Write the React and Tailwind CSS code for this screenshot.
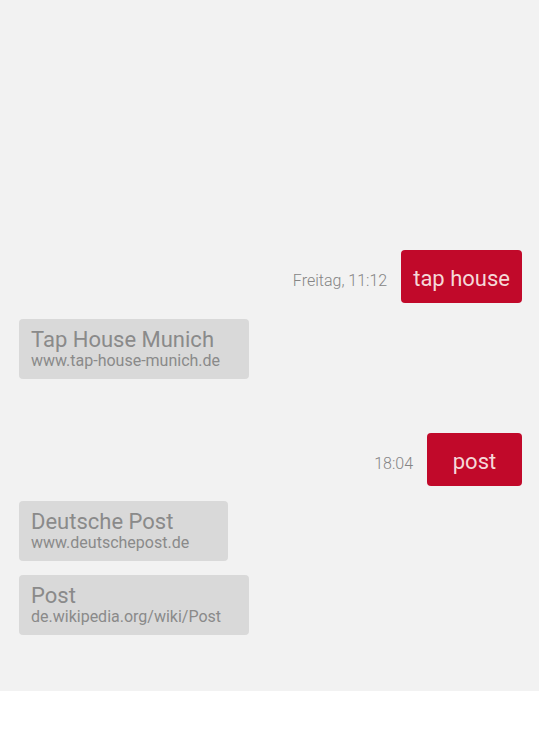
import React from 'react';

const messages = [
    { type: 'out', time: 'Freitag, 11:12', text: 'tap house' },
    { type: 'card', title: 'Tap House Munich', url: 'www.tap-house-munich.de', width: 'w-[230px]', mt: 'mt-[16px]' },
    { type: 'out', time: '18:04', text: 'post', mt: 'mt-[54px]' },
    { type: 'card', title: 'Deutsche Post', url: 'www.deutschepost.de', width: 'w-[209px]', mt: 'mt-[15px]' },
    { type: 'card', title: 'Post', url: 'de.wikipedia.org/wiki/Post', width: 'w-[230px]', mt: 'mt-[14px]' },
];

function OutMessage({ time, text, mt = '' }) {
    return (
        <div className={`flex items-baseline justify-end gap-[14px] ${mt}`}>
            <span className="text-[16px] font-light text-[#858585]">{time}</span>
            <div className="min-w-[95px] rounded-[4px] bg-[#c1092a] px-3 pt-[18px] pb-[13px] text-center text-[22px] leading-[22px] text-[#f5d8d8]">
                {text}
            </div>
        </div>
    );
}

function ResultCard({ title, url, width, mt }) {
    return (
        <div className={`${width} ${mt} rounded-[4px] bg-[#d9d9d9] pl-3 pt-[10px] pb-[9px] text-[#8a8a8a]`}>
            <div className="text-[22px] leading-[22px]">{title}</div>
            <div className="text-[16px] leading-[19px]">{url}</div>
        </div>
    );
}

export default function App() {
    return (
        <div className="h-[730px] w-[541px] bg-white font-['Roboto',sans-serif]">
            <div className="h-[691px] w-[539px] bg-[#f2f2f2] pt-[250px] pl-[19px] pr-[17px]">
                {messages.map((m, i) =>
                    m.type === 'out' ? (
                        <OutMessage key={i} time={m.time} text={m.text} mt={m.mt} />
                    ) : (
                        <ResultCard key={i} {...m} />
                    )
                )}
            </div>
        </div>
    );
}
